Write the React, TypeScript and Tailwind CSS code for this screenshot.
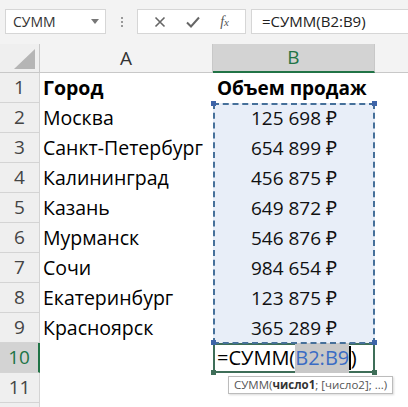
import React from 'react';

const rows: [string, string][] = [
  ['Москва', '125 698 ₽'],
  ['Санкт-Петербург', '654 899 ₽'],
  ['Калининград', '456 875 ₽'],
  ['Казань', '649 872 ₽'],
  ['Мурманск', '546 876 ₽'],
  ['Сочи', '984 654 ₽'],
  ['Екатеринбург', '123 875 ₽'],
  ['Красноярск', '365 289 ₽'],
];

const font = { fontFamily: '"Open Sans", "Noto Sans", "DejaVu Sans", sans-serif' };

function RowNum({ n, active }: { n?: number; active?: boolean }) {
  return (
    <div
      className={`h-[30px] flex items-center justify-center border-b border-r border-[#d4d4d4] text-[19px] ${
        active ? 'bg-[#d3d3d3] text-[#217346] border-r-2 border-r-[#217346]' : 'bg-[#efefef] text-[#444]'
      }`}
    >
      {n}
    </div>
  );
}

export default function App() {
  return (
    <div className="w-[408px] h-[407px] overflow-hidden bg-white" style={font}>
      {/* formula bar */}
      <div className="h-[44px] bg-[#f3f3f3] flex items-start pt-[9px] pl-[5px]">
        <div className="w-[101px] h-[25px] bg-white border border-[#d6d6d6] flex items-center justify-between pl-[7px] pr-[6px] text-[14px] text-[#333]">
          <span>СУММ</span>
          <svg width="8" height="5" viewBox="0 0 8 5">
            <path d="M0 0 L8 0 L4 5 Z" fill="#777" />
          </svg>
        </div>
        <div className="w-[31px] h-[25px] flex items-center justify-center">
          <div className="flex flex-col gap-[2px]">
            <span className="w-[2px] h-[2px] bg-[#999]" />
            <span className="w-[2px] h-[2px] bg-[#999]" />
            <span className="w-[2px] h-[2px] bg-[#999]" />
          </div>
        </div>
        <div className="w-[109px] h-[25px] bg-white border border-[#d6d6d6] flex items-center justify-around px-[6px] text-[#555]">
          <svg width="12" height="12" viewBox="0 0 12 12">
            <path d="M1.5 1.5 L10.5 10.5 M10.5 1.5 L1.5 10.5" stroke="#666" strokeWidth="1.6" />
          </svg>
          <svg width="14" height="12" viewBox="0 0 14 12">
            <path d="M1 6.5 L5 10.5 L13 1.5" stroke="#666" strokeWidth="2" fill="none" />
          </svg>
          <span className="text-[14px] italic text-[#555]" style={{ fontFamily: '"Liberation Serif", serif' }}>
            f<span className="text-[11px]">x</span>
          </span>
        </div>
        <div className="ml-[5px] flex-1 h-[25px] bg-white border border-[#d6d6d6] border-r-0 flex items-center pl-[10px] text-[15px] text-[#222]">
          =СУММ(B2:B9)
        </div>
      </div>

      {/* sheet */}
      <div className="relative grid grid-cols-[40px_173px_162px_1fr]">
        {/* header row */}
        <div className="h-[29px] bg-[#efefef] border-r border-b border-[#c8c8c8] flex items-end justify-end pr-[4px] pb-[3px]">
          <svg width="21" height="20" viewBox="0 0 21 20">
            <path d="M21 0 L21 20 L0 20 Z" fill="#b5b5b5" />
          </svg>
        </div>
        <div className="h-[29px] bg-[#f3f3f3] border-r border-b border-[#c8c8c8] flex items-center justify-center text-[19px] text-[#333]">
          A
        </div>
        <div className="h-[29px] bg-[#d3d3d3] border-r border-[#c8c8c8] border-b-2 border-b-[#217346] flex items-center justify-center text-[19px] text-[#217346]">
          B
        </div>
        <div className="h-[29px] bg-[#f3f3f3] border-b border-[#c8c8c8]" />

        {/* row 1 */}
        <RowNum n={1} />
        <div className="h-[30px] flex items-center pl-[3px] text-[19.5px] font-bold text-black">Город</div>
        <div className="h-[30px] flex items-center pl-[4px] text-[19px] font-bold text-black">Объем продаж</div>
        <div />

        {rows.map(([city, val], i) => (
          <React.Fragment key={city}>
            <RowNum n={i + 2} />
            <div className="h-[30px] flex items-center pl-[3px] text-[19.5px] text-black whitespace-nowrap">{city}</div>
            <div className="h-[30px] flex items-center justify-center bg-[#e8eef8] text-[19px] text-[#111]">{val}</div>
            <div />
          </React.Fragment>
        ))}

        {/* row 10 */}
        <RowNum n={10} active />
        <div className="h-[30px]" />
        <div className="h-[30px] border-2 border-[#3e6e58] flex items-center pl-[2px] text-[20px] text-black whitespace-nowrap">
          =СУММ(
          <span className="bg-[#c8c8c8] text-[#3a6cc4]">B2:B9</span>
          <span className="w-[1.5px] h-[24px] bg-black" />)
        </div>
        <div />

        {/* row 11 */}
        <RowNum n={11} />
        <div />
        <div />
        <div />
        <RowNum />
        <div />
        <div />
        <div />

        {/* range marquee over B2:B9 */}
        <div className="absolute left-[213px] top-[59px] w-[162px] h-[241px] border-2 border-dashed border-[#46709a] pointer-events-none" />
        <div className="absolute left-[211px] top-[57px] w-[5px] h-[5px] bg-[#3e64a8]" />
        <div className="absolute left-[372px] top-[57px] w-[5px] h-[5px] bg-[#3e64a8]" />
        <div className="absolute left-[211px] top-[296px] w-[5px] h-[5px] bg-[#3e64a8]" />
        <div className="absolute left-[372px] top-[296px] w-[5px] h-[5px] bg-[#3e64a8]" />
        <div className="absolute left-[211px] top-[326px] w-[5px] h-[5px] bg-[#3e6e58]" />
        <div className="absolute left-[372px] top-[326px] w-[5px] h-[5px] bg-[#3e6e58]" />

        {/* tooltip */}
        <div className="absolute left-[228px] top-[332px] h-[18px] px-[5px] bg-white border border-[#bcbcbc] shadow-[1px_1px_2px_rgba(0,0,0,0.15)] flex items-center text-[11.5px] text-[#555] whitespace-nowrap">
          СУММ(<b className="font-bold text-[#333]">число1</b>; [число2]; ...)
        </div>
      </div>
    </div>
  );
}
